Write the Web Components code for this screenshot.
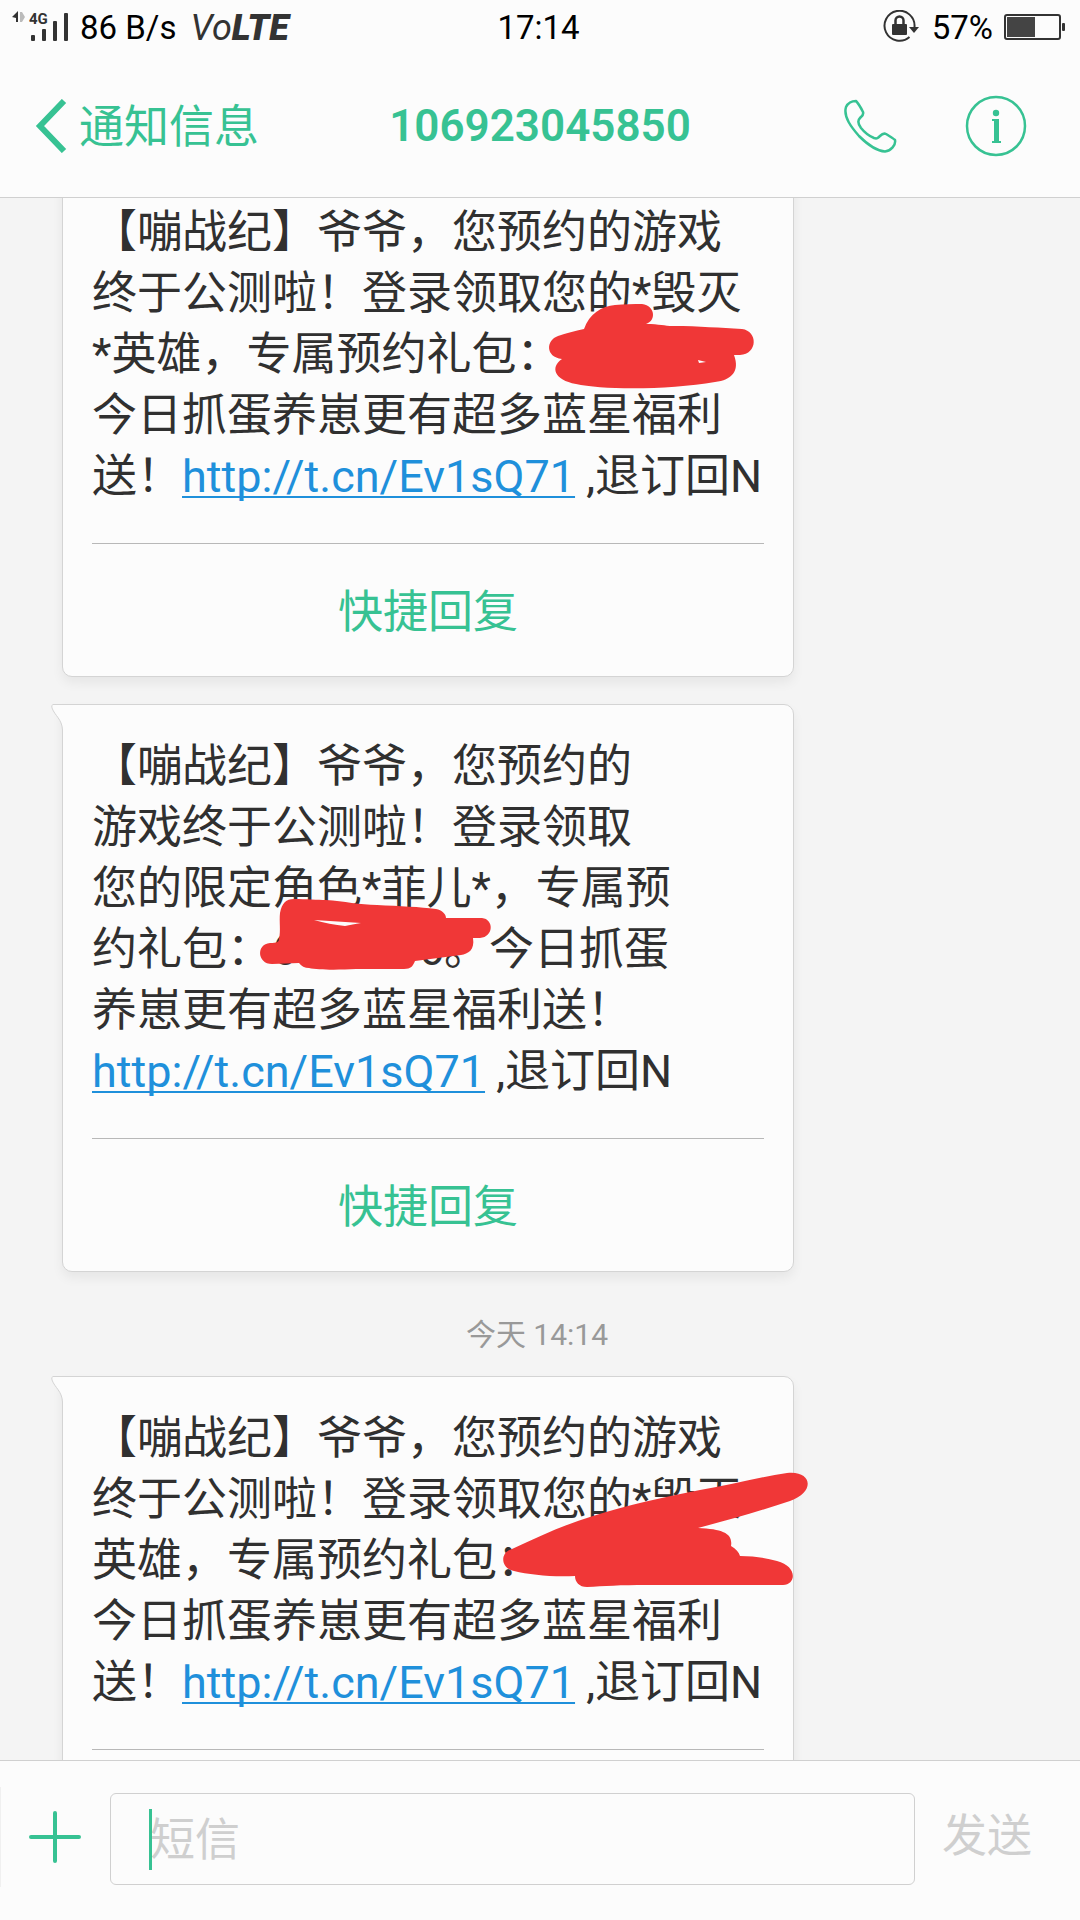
<!DOCTYPE html>
<html lang="zh-CN">
<head>
<meta charset="utf-8">
<meta name="viewport" content="width=device-width, initial-scale=1">
<title>106923045850</title>
<style>
  :root {
    --green: #37c293;
    --panel: #fcfcfc;
    --line: #d0d0d0;
    --muted: #cfcfcf;
    --ink: #f03737;
  }

  body {
    display: flex;
    flex-direction: column;
    height: 100vh;
    margin: 0;
    overflow: hidden;
    background: #f4f4f4;
    color: #303030;
    font-family: Roboto, "Noto Sans CJK SC", sans-serif;
    font-size: 45px;
    line-height: 61px;
    text-spacing-trim: space-all;
  }
</style>
</head>
<body>

<status-bar speed="86 B/s" time="17:14" battery="57%"></status-bar>
<nav-bar back="通知信息">106923045850</nav-bar>

<message-list>
  <message-card reply="快捷回复">
    【嘣战纪】爷爷，您预约的游戏<br>终于公测啦！登录领取您的*毁灭<br>*英雄，专属预约礼包：<br>今日抓蛋养崽更有超多蓝星福利<br>送！<a href="http://t.cn/Ev1sQ71">http://t.cn/Ev1sQ71</a> ,退订回N
    <svg slot="ink" viewBox="92 202 670 305" width="670" height="305">
      <path d="M584 329C589 314 602 306 615 305C624 304 634 304 642 304C656 306 656 321 646 324C660 324 664 326 673 326C700 326 720 328 742 329C758 331 758 354 740 355L734 355C740 371 732 380 715 382C670 390 602 390 576 384C554 380 550 367 562 359C545 357 546 340 558 336C566 333 575 331 584 329Z"/>
      <path class="gap" d="M698 360L706 362L699 363Z"/>
    </svg>
  </message-card>
  <message-card tail reply="快捷回复">
    【嘣战纪】爷爷，您预约的<br>游戏终于公测啦！登录领取<br>您的限定角色*菲儿*，专属预<br>约礼包：<span class="code"><span>6</span><span>6</span></span>。今日抓蛋<br>养崽更有超多蓝星福利送！<br><a href="http://t.cn/Ev1sQ71">http://t.cn/Ev1sQ71</a> ,退订回N
    <svg slot="ink" viewBox="92 736 670 366" width="670" height="366">
      <path d="M280 913C282 903 286 899 294 899C306 899 318 900 326 900C344 901 360 905 377 905C400 906 420 907 436 909C442 910 446 914 446 918L482 918C494 919 494 937 480 938L473 938C475 950 468 954 461 955L415 961C413 966 411 969 404 969L356 969C338 970 318 970 309 968C305 968 301 966 299 963L272 964C257 964 256 944 270 943C277 943 279 942 279 939C281 930 279 922 280 913Z"/>
      <path class="gap" d="M314 920L361 923C355 924 350 925 345 926C335 925 324 923 314 920Z"/>
    </svg>
  </message-card>
  <time-stamp>今天 14:14</time-stamp>
  <message-card tail>
    【嘣战纪】爷爷，您预约的游戏<br>终于公测啦！登录领取您的*毁灭<br>英雄，专属预约礼包：<br>今日抓蛋养崽更有超多蓝星福利<br>送！<a href="http://t.cn/Ev1sQ71">http://t.cn/Ev1sQ71</a> ,退订回N
    <svg slot="ink" viewBox="92 1408 670 305" width="670" height="305">
      <path d="M512 1549C540 1536 566 1524 593 1516C628 1505 664 1497 700 1490C730 1485 760 1477 787 1473C812 1470 816 1492 790 1501C760 1511 728 1520 698 1528C724 1529 733 1534 731 1546C736 1549 739 1552 740 1556C754 1556 766 1558 777 1561C797 1566 797 1584 783 1585L647 1585C620 1585 604 1586 587 1587C579 1587 575 1582 575 1576C552 1577 530 1575 514 1571C500 1568 500 1552 512 1549Z"/>
    </svg>
  </message-card>
</message-list>

<compose-bar placeholder="短信" send="发送"></compose-bar>

<script>
class StatusBar extends HTMLElement {
  constructor(){
    super();

    let tmpl = document.createElement('template');
    tmpl.innerHTML = `
    <style>
    :host {
        display: grid;
        grid-template-columns: 1fr auto 1fr;
        align-items: center;
        flex: none;
        height: 54px;
        padding: 0 15px 0 12px;
        font-size: 33px;
        line-height: 40px;
        color: #000;
        background: var(--panel);
    }

    .left, .right {
        display: flex;
        align-items: center;
    }

    .right {
        justify-content: flex-end;
        gap: 11px;
    }

    span {
        padding-top: 2px;
    }

    .speed {
        margin: 0 14px 0 12px;
    }

    .volte {
        font-size: 36px;
        font-style: italic;
        color: #333;
    }

    .volte b {
        font-weight: 900;
    }

    svg {
        display: block;
    }

    svg text {
        font: 700 15px Roboto, sans-serif;
    }
    </style>
    <div class="left">
      <svg width="56" height="32" viewBox="0 0 56 32" fill="#333">
        <path d="M0 6L6 0V11H4V7Z"/>
        <path d="M13 6L10 1H8V11H10Z" fill="#bbb"/>
        <text x="17" y="13">4G</text>
        <rect x="19" y="24" width="4" height="6" rx="1"/>
        <rect x="30" y="18" width="4" height="12" rx="1"/>
        <rect x="41" y="10" width="4" height="20" rx="1"/>
        <rect x="52" y="2" width="4" height="28" rx="1"/>
      </svg>
      <span class="speed">${this.getAttribute('speed')}</span>
      <span class="volte">Vo<b>LTE</b></span>
    </div>
    <span>${this.getAttribute('time')}</span>
    <div class="right">
      <svg width="38" height="34" viewBox="0 0 38 34">
        <path d="M26.500 27A15 15 0 1 1 31.500 17" fill="none" stroke="#333" stroke-width="2"/>
        <path d="M26 17H36L31 23Z" fill="#333"/>
        <rect x="9" y="14" width="15" height="11" rx="1" fill="#333"/>
        <path d="M12.500 14V10.500a4 4 0 0 1 8 0V14" fill="none" stroke="#333" stroke-width="2.500"/>
      </svg>
      <span>${this.getAttribute('battery')}</span>
      <svg width="61" height="28" viewBox="0 0 61 28">
        <rect x="1" y="2" width="55" height="24" rx="2" fill="none" stroke="#333" stroke-width="2"/>
        <rect x="3" y="4" width="28" height="20" fill="#444"/>
        <rect x="58" y="10" width="3" height="8" rx="1" fill="#333"/>
      </svg>
    </div>
    `;

    let shadowRoot = this.attachShadow({mode: 'open'});
    shadowRoot.appendChild(tmpl.content.cloneNode(true));
  }
}

class NavBar extends HTMLElement {
  constructor(){
    super();

    let tmpl = document.createElement('template');
    tmpl.innerHTML = `
    <style>
    :host {
        display: grid;
        grid-template-columns: 1fr auto 1fr;
        align-items: center;
        flex: none;
        height: 143px;
        padding: 0 53px 0 35px;
        color: var(--green);
        background: var(--panel);
        border-bottom: 1px solid var(--line);
    }

    button, a {
        display: flex;
        align-items: center;
        padding: 0;
        font: inherit;
        color: inherit;
        text-decoration: none;
        background: none;
        border: 0;
    }

    a {
        gap: 12px;
    }

    a span {
        padding-top: 4px;
    }

    h1 {
        margin: 0 0 0 18px;
        padding-top: 2px;
        font-size: 44px;
        font-weight: 600;
    }

    .actions {
        display: flex;
        align-items: center;
        justify-content: flex-end;
        gap: 68px;
    }
    </style>
    <a href="#">
      <svg width="32" height="54" viewBox="0 0 32 54" fill="none" stroke="currentColor" stroke-width="6">
        <path d="M29 2L5 27L29 52"/>
      </svg>
      <span>${this.getAttribute('back')}</span>
    </a>
    <h1><slot></slot></h1>
    <div class="actions">
      <button aria-label="呼叫">
        <svg width="54" height="54" viewBox="0 0 54 54" fill="none" stroke="currentColor" stroke-width="2.500" stroke-linejoin="round">
          <path d="M3 8C5 4 9 2 13 2C15 4 18 9 20 13C21 16 19 17 17 19C14 22 15 25 18 29C22 34 26 37 31 39C34 40 35 39 37 37C39 35 41 34 43 35C46 37 50 39 52 41C53 46 48 52 42 52.500C34 52 24 45 16 37C9 29 0 18 3 8Z"/>
        </svg>
      </button>
      <button aria-label="详情">
        <svg width="62" height="62" viewBox="0 0 62 62">
          <circle cx="31" cy="31" r="29" fill="none" stroke="currentColor" stroke-width="2.500"/>
          <circle cx="31" cy="18" r="3.200" fill="currentColor"/>
          <path d="M27 24H34V46H36V48H27V46H29V26H27Z" fill="currentColor"/>
        </svg>
      </button>
    </div>
    `;

    let shadowRoot = this.attachShadow({mode: 'open'});
    shadowRoot.appendChild(tmpl.content.cloneNode(true));
  }
}

class MessageList extends HTMLElement {
  constructor(){
    super();

    let tmpl = document.createElement('template');
    tmpl.innerHTML = `
    <style>
    :host {
        display: block;
        flex: 1;
        min-height: 0;
        overflow-x: hidden;
        overflow-y: auto;
        scrollbar-width: none;
    }
    </style>
    <slot></slot>
    `;

    let shadowRoot = this.attachShadow({mode: 'open'});
    shadowRoot.appendChild(tmpl.content.cloneNode(true));
  }
}

class MessageCard extends HTMLElement {
  constructor(){
    super();

    let reply = this.getAttribute('reply');
    let tmpl = document.createElement('template');
    tmpl.innerHTML = `
    <style>
    :host {
        display: block;
        position: relative;
        margin: 0 286px 27px 62px;
        padding: 31px 29px 0;
        background: var(--panel);
        border: 1px solid #d4d4d4;
        border-radius: 10px;
        box-shadow: 0 6px 12px rgba(0, 0, 0, .06);
    }

    :host([tail]) {
        border-top-left-radius: 0;
    }

    .tail {
        display: none;
        position: absolute;
        top: -1px;
        left: -12px;
    }

    :host([tail]) .tail {
        display: block;
    }

    .text {
        position: relative;
        white-space: nowrap;
    }

    ::slotted(a) {
        color: #1f90db;
        text-decoration: underline;
        text-decoration-thickness: 2px;
        text-decoration-skip-ink: none;
        text-underline-offset: 4px;
    }

    ::slotted(.code) {
        display: inline-flex;
        justify-content: space-between;
        width: 172px;
    }

    ::slotted(svg) {
        position: absolute;
        top: 0;
        left: 0;
        overflow: visible;
        fill: var(--ink);
        pointer-events: none;
    }

    .actions {
        height: 132px;
        margin-top: 36px;
        border-top: 1px solid #b8b8b8;
    }

    button {
        display: block;
        width: 100%;
        height: 100%;
        padding: 4px 0 0;
        font: inherit;
        color: var(--green);
        background: none;
        border: 0;
    }
    </style>
    <svg class="tail" width="13" height="26" viewBox="0 0 13 26">
      <path d="M13 0.500H2Q0 1 1 4C4 12 11 15 11.500 26H13Z" fill="#fcfcfc"/>
      <path d="M13 0.500H2Q0 1 1 4C4 12 11 15 11.500 26" fill="none" stroke="#d4d4d4"/>
    </svg>
    <div class="text"><slot></slot><slot name="ink"></slot></div>
    <div class="actions">${reply ? `<button>${reply}</button>` : ''}</div>
    `;

    let shadowRoot = this.attachShadow({mode: 'open'});
    shadowRoot.appendChild(tmpl.content.cloneNode(true));

    this.querySelectorAll('.gap').forEach(gap => gap.setAttribute('fill', '#fcfcfc'));
  }
}

class TimeStamp extends HTMLElement {
  constructor(){
    super();

    let tmpl = document.createElement('template');
    tmpl.innerHTML = `
    <style>
    :host {
        display: block;
        padding: 16px 6px 21px 0;
        font-size: 30px;
        line-height: 40px;
        text-align: center;
        color: #999;
    }
    </style>
    <slot></slot>
    `;

    let shadowRoot = this.attachShadow({mode: 'open'});
    shadowRoot.appendChild(tmpl.content.cloneNode(true));
  }
}

class ComposeBar extends HTMLElement {
  constructor(){
    super();

    let tmpl = document.createElement('template');
    tmpl.innerHTML = `
    <style>
    :host {
        display: flex;
        align-items: center;
        flex: none;
        box-sizing: border-box;
        height: 160px;
        padding: 0 48px 8px 0;
        background: var(--panel);
        border-top: 1px solid var(--line);
    }

    button {
        padding: 0;
        font: inherit;
        background: none;
        border: 0;
    }

    .add {
        width: 110px;
        height: 100px;
        padding-right: 2px;
        color: var(--green);
        border-left: 1px solid #f0f0f0;
    }

    .add svg {
        display: block;
        margin: 0 auto;
    }

    .field {
        position: relative;
        flex: 1;
        min-width: 0;
        margin-top: 4px;
    }

    input {
        display: block;
        box-sizing: border-box;
        width: 100%;
        height: 92px;
        padding: 4px 39px 0;
        font: inherit;
        background: none;
        border: 1px solid var(--line);
        border-radius: 6px;
    }

    input::placeholder {
        color: var(--muted);
        opacity: 1;
    }

    .caret {
        position: absolute;
        top: 16px;
        left: 39px;
        width: 3px;
        height: 61px;
        background: var(--green);
    }

    .send {
        margin-left: 27px;
        color: var(--muted);
    }
    </style>
    <button class="add" aria-label="添加">
      <svg width="54" height="54" viewBox="0 0 54 54" stroke="currentColor" stroke-width="4" stroke-linecap="round">
        <path d="M27 3V51M3 27H51"/>
      </svg>
    </button>
    <div class="field">
      <input type="text" aria-label="${this.getAttribute('placeholder')}" placeholder="${this.getAttribute('placeholder')}">
      <span class="caret"></span>
    </div>
    <button class="send">${this.getAttribute('send')}</button>
    `;

    let shadowRoot = this.attachShadow({mode: 'open'});
    shadowRoot.appendChild(tmpl.content.cloneNode(true));
  }
}

window.customElements.define('status-bar', StatusBar);
window.customElements.define('nav-bar', NavBar);
window.customElements.define('message-list', MessageList);
window.customElements.define('message-card', MessageCard);
window.customElements.define('time-stamp', TimeStamp);
window.customElements.define('compose-bar', ComposeBar);

// start a little way into the thread
document.querySelector('message-list').scrollTop = 28;
</script>
</body>
</html>
